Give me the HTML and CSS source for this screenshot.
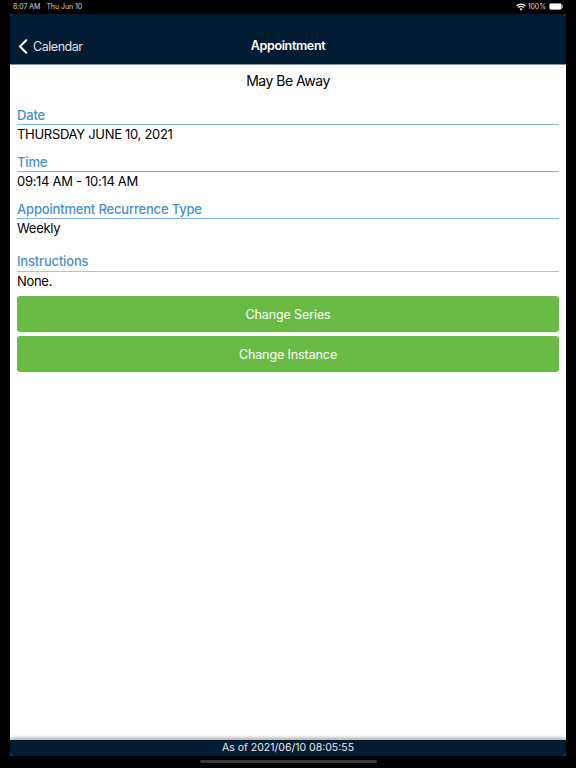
FILE: index.html
```html
<!DOCTYPE html>
<html lang="en">
<head>
<meta charset="utf-8">
<title>Appointment</title>
<link rel="stylesheet" href="styles.css">
</head>
<body>
<div class="status">
  <div class="status-left"><span>8:07 AM</span><span>Thu Jun 10</span></div>
  <div class="status-right">
    <svg class="wifi" width="10" height="8" viewBox="0 0 10 8"><path d="M5 7.6 3.5 5.9a2.2 2.2 0 0 1 3 0zM2.7 5.1 1.8 4.1a4.8 4.8 0 0 1 6.4 0l-.9 1a3.4 3.4 0 0 0-4.6 0zM1.1 3.4.2 2.4a7.2 7.2 0 0 1 9.6 0l-.9 1a5.9 5.9 0 0 0-7.8 0z" fill="#fff"/></svg>
    <span>100%</span>
    <span class="battery"><span class="battery-fill"></span></span><span class="battery-cap"></span>
  </div>
</div>
<div class="window">
  <header class="nav">
    <a class="back">
      <svg width="10" height="15" viewBox="0 0 10 15"><path d="M8.2 1.2 2 7.5l6.2 6.3" fill="none" stroke="#fff" stroke-width="2" stroke-linecap="round" stroke-linejoin="round"/></svg>
      <span>Calendar</span>
    </a>
    <h1 class="nav-title">Appointment</h1>
  </header>
  <main class="content">
    <h2 class="title">May Be Away</h2>
    <section class="field">
      <h3 class="label">Date</h3>
      <p class="value">THURSDAY JUNE 10, 2021</p>
    </section>
    <section class="field">
      <h3 class="label">Time</h3>
      <p class="value">09:14 AM - 10:14 AM</p>
    </section>
    <section class="field field-tall">
      <h3 class="label">Appointment Recurrence Type</h3>
      <p class="value">Weekly</p>
    </section>
    <section class="field field-last">
      <h3 class="label">Instructions</h3>
      <p class="value">None.</p>
    </section>
    <div class="actions">
      <button class="btn">Change Series</button>
      <button class="btn">Change Instance</button>
    </div>
  </main>
  <footer class="foot">As of 2021/06/10 08:05:55</footer>
</div>
<div class="home"></div>
</body>
</html>
```
FILE: styles.css
```css
* { box-sizing: border-box; }
html, body { margin: 0; height: 100%; }
body {
  width: 576px;
  height: 768px;
  overflow: hidden;
  background: #000;
  font-family: Inter, "Liberation Sans", sans-serif;
  color: #000;
  display: flex;
  flex-direction: column;
  align-items: center;
}
.status {
  width: 100%;
  height: 13px;
  margin-bottom: 1px;
  padding: 0 13px;
  display: flex;
  justify-content: space-between;
  align-items: center;
  color: #d8d8d8;
  font-size: 7px;
  letter-spacing: -0.05px;
}
.status-left { display: flex; gap: 6px; }
.status-right { display: flex; align-items: center; gap: 2px; }
.battery {
  width: 13px;
  height: 7px;
  margin-left: 1px;
  border: 1px solid #999;
  border-radius: 2px;
  display: block;
}
.battery-fill { display: block; width: 100%; height: 100%; background: #fff; }
.battery-cap { width: 1px; height: 3px; margin-left: -2px; background: #888; }
.window {
  width: 556px;
  height: 742px;
  border-radius: 3px;
  overflow: hidden;
  background: #fff;
  display: flex;
  flex-direction: column;
}
.nav {
  flex: none;
  height: 51px;
  background: #021d33;
  border-bottom: 1px solid #8794a0;
  color: #dfe3e7;
  display: flex;
  align-items: flex-end;
  justify-content: center;
  position: relative;
}
.back {
  position: absolute;
  left: 8px;
  top: 25px;
  display: flex;
  align-items: center;
  gap: 5px;
  font-size: 12.5px;
  letter-spacing: -0.45px;
  line-height: 15px;
}
.nav-title {
  margin: 0 0 11px;
  font-size: 12.5px;
  letter-spacing: -0.35px;
  line-height: 15px;
  font-weight: 600;
  color: #fff;
}
.content {
  flex: 1;
  padding: 6px 7px 0;
  display: flex;
  flex-direction: column;
}
.title {
  margin: 0 0 17px;
  font-size: 14px;
  letter-spacing: -0.5px;
  line-height: 19px;
  font-weight: 400;
  text-align: center;
}
.field { height: 47px; }
.field-tall { height: 52px; }
.field-last { height: 43px; }
.label {
  margin: 0;
  height: 18px;
  font-size: 13px;
  letter-spacing: -0.18px;
  line-height: 16px;
  font-weight: 500;
  color: #4a90cd;
  border-bottom: 1px solid #7fb0de;
}
.field-last .label {
  height: 19px;
  border-bottom-color: #a3c6e6;
}
.value {
  margin: 0;
  font-size: 13px;
  letter-spacing: -0.3px;
  line-height: 18px;
}
.actions { display: flex; flex-direction: column; gap: 4px; }
.btn {
  height: 36px;
  border: 0;
  border-radius: 3px;
  background: #6abb46;
  color: #fff;
  font: 400 12.5px Inter, "Liberation Sans", sans-serif;
  letter-spacing: -0.1px;
}
.foot {
  flex: none;
  height: 16px;
  background: #021d33;
  color: #e8ebee;
  font-size: 10.5px;
  line-height: 16px;
  text-align: center;
  box-shadow: 0 -2px 4px rgba(0,0,0,.35);
}
.home {
  width: 177px;
  height: 3px;
  margin-top: 4px;
  border-radius: 2px;
  background: #3a3a3a;
}
```
